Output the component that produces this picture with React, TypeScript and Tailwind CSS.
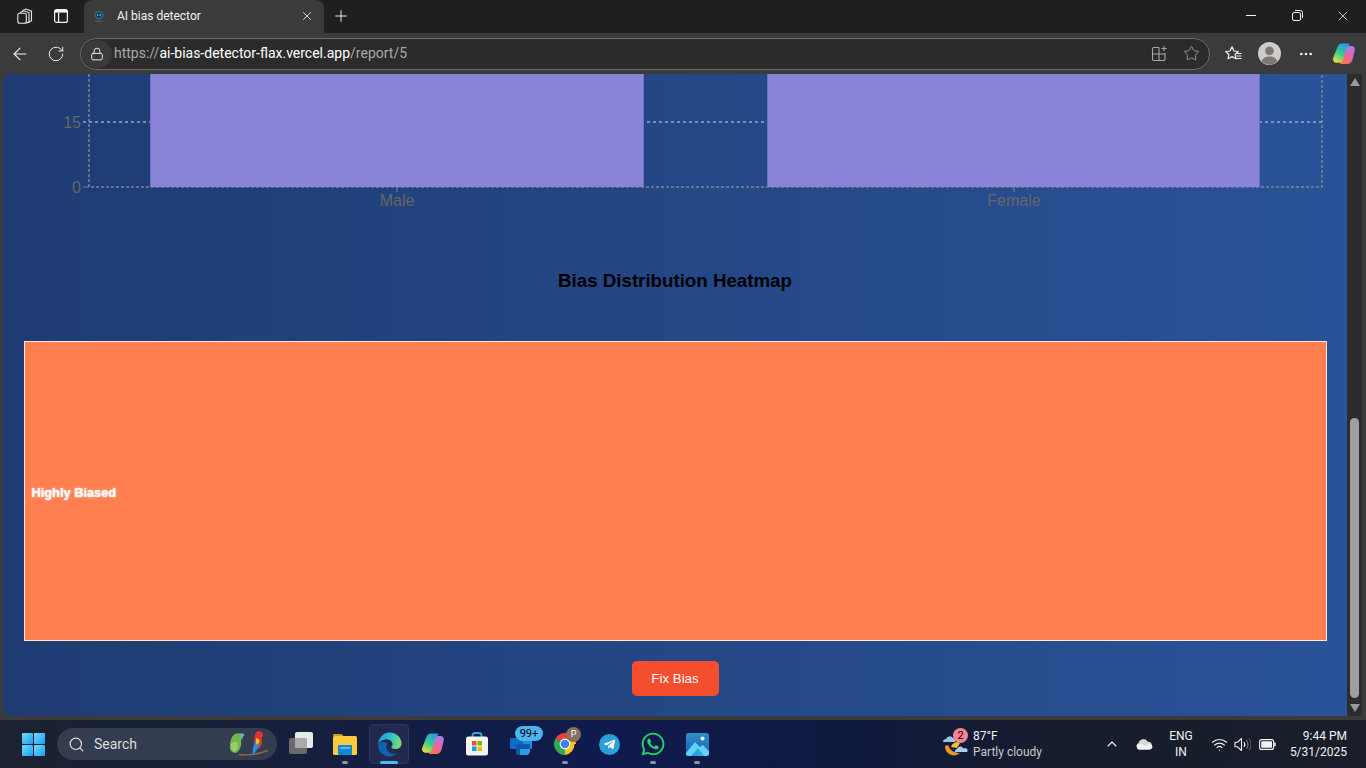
import { ArrowLeft, ChevronUp, Lock, MoreHorizontal, Plus, RotateCw, Search, Star, Wifi, X } from 'lucide-react';
import { FaTelegramPlane, FaWhatsapp } from 'react-icons/fa';
import type { ReactNode } from 'react';

function TabsIcon() {
  return (
    <svg width="18" height="18" viewBox="0 0 18 18" fill="none" stroke="#e8e8e8" strokeWidth="1.1">
      <path d="M6.5 3.5 10 2l5.5 2.200v9.600L12 15.800" />
      <path d="M4 5.500 8 3.800l5 2v9l-3 1.400" />
      <rect x="1.800" y="6.200" width="8.500" height="10" rx="2" />
    </svg>
  );
}

function VerticalTabsIcon() {
  return (
    <svg width="16" height="16" viewBox="0 0 16 16" fill="none" stroke="#f2f2f2" strokeWidth="1.2">
      <rect x="1.600" y="1.600" width="12.800" height="12.800" rx="2" />
      <path d="M5.600 4.600v9.800" />
      <path d="M2 2h12v2.600H2z" fill="#f2f2f2" stroke="none" />
    </svg>
  );
}

function Favicon() {
  return (
    <svg width="12" height="14" viewBox="0 0 12 14">
      <circle cx="6" cy="6" r="4.500" fill="#2a6685" />
      <circle cx="6" cy="6" r="2.800" fill="#12384f" />
      <circle cx="4.800" cy="6" r="0.800" fill="#8fd4ee" />
      <circle cx="7.200" cy="6" r="0.800" fill="#8fd4ee" />
      <rect x="2" y="11.500" width="8" height="1.500" rx="0.700" fill="#555" />
    </svg>
  );
}

function CollectionsIcon() {
  return (
    <svg width="17" height="17" viewBox="0 0 17 17" fill="none" stroke="#a8a8a8" strokeWidth="1.1">
      <path d="M8 2.500H3A1.500 1.500 0 0 0 1.500 4v10A1.500 1.500 0 0 0 3 15.500h9.500A1.500 1.500 0 0 0 14 14V8" />
      <path d="M1.500 9H14M8 2.500v13" />
      <path d="M13 1v5M10.500 3.500h5" />
    </svg>
  );
}

function FavoritesIcon() {
  return (
    <svg width="18" height="18" viewBox="0 0 18 18" fill="none" stroke="#f0f0f0" strokeWidth="1.2" strokeLinejoin="round">
      <path d="M7 1.800 9 6l4.300.5-3.200 3 .9 4.300-4-2.200-4 2.200.9-4.300-3.200-3L5 6z" />
      <path d="M11.500 8.500h5M11.500 11h5M10.500 13.500h6" />
    </svg>
  );
}

function Avatar() {
  return (
    <svg width="23" height="23" viewBox="0 0 23 23">
      <circle cx="11.500" cy="11.500" r="11.500" fill="#d0cdc9" />
      <circle cx="11.500" cy="8.800" r="4.400" fill="#7d7a76" />
      <path d="M3.600 19.600C5 15.800 8 14.600 11.500 14.600s6.500 1.200 7.900 5A11.500 11.500 0 0 1 3.600 19.600z" fill="#7d7a76" />
    </svg>
  );
}

function CopilotIcon({ id }: { id: string }) {
  return (
    <svg width="24" height="24" viewBox="0 0 24 24">
      <defs>
        <linearGradient id={`${id}a`} x1="0.700" y1="0" x2="0.200" y2="1">
          <stop offset="0" stopColor="#1f9cf0" />
          <stop offset="0.500" stopColor="#2fd08c" />
          <stop offset="1" stopColor="#f2d83c" />
        </linearGradient>
        <linearGradient id={`${id}b`} x1="0.800" y1="0" x2="0.300" y2="1">
          <stop offset="0" stopColor="#a97cf2" />
          <stop offset="0.550" stopColor="#ee62a8" />
          <stop offset="1" stopColor="#fa7a3c" />
        </linearGradient>
      </defs>
      <path d="M13.500 5.500c1-1.200 2.200-1.500 3.500-1.500h2.500c2.500 0 3.800 2 3.200 4.500l-2 8.500c-.7 3-2.700 5-5.700 5H10c-1.200 0-2-.5-2.200-1.300z" fill={`url(#${id}b)`} />
      <path d="M5.500 5c.7-2.500 2.500-3.500 4.500-3.500h6c1.500 0 2 .8 1.300 1.500-1.500.8-2.800 2.500-3.500 5l-2.800 9.500c-.6 2-2 3.300-4 3.300H5c-3 0-4.500-2.300-3.800-5z" fill={`url(#${id}a)`} />
    </svg>
  );
}

function WindowsLogo() {
  const pane = 'rounded-[1px] bg-[linear-gradient(135deg,#6fdcfb,#1b9cf0)]';
  return (
    <div className="grid h-[23px] w-[23px] grid-cols-2 gap-[1px]">
      <div className={pane} />
      <div className={pane} />
      <div className={pane} />
      <div className={pane} />
    </div>
  );
}

function Parrots() {
  return (
    <svg width="42" height="28" viewBox="0 0 42 28">
      <path d="M11 24.500c8 1 18 0 29-4" stroke="#8a6a50" strokeWidth="1.400" fill="none" />
      <path d="M4 7c2-4 8-5 11-2 1.500 2-1 4-2 5 1 5-1 11-5 13-4 0-7-3-6-8 0-3 1-6 2-8z" fill="#72b54e" />
      <path d="M3 14c2-3 6-3 7 0 .5 3-1 6-3 8-3-1-5-4-4-8z" fill="#9ccb6a" />
      <circle cx="14" cy="5.500" r="2.200" fill="#5fb4c8" />
      <path d="M15.500 6c1.500.2 2 1.500 1.200 3-1 0-1.700-.7-1.900-1.500z" fill="#2a3a42" />
      <ellipse cx="30" cy="11" rx="4" ry="7.500" fill="#e2362a" />
      <circle cx="31" cy="5" r="3.800" fill="#e2362a" />
      <path d="M28 11c3 0 4 3 2 7l-5 7.500c-1-5 0-10 3-14.500z" fill="#2f8fd8" />
      <path d="M28 8.500c3 0 4 2 3 4.500l-3 1.500z" fill="#f1c21b" />
    </svg>
  );
}

function TaskView() {
  return (
    <div className="relative h-[24px] w-[24px]">
      <div className="absolute left-0 top-[6px] h-[16px] w-[18px] rounded-[2px] bg-[#6a6a6a]" />
      <div className="absolute right-0 top-0 h-[16px] w-[18px] rounded-[2px] bg-[#e8e8e8]" />
      <div className="absolute left-[6px] top-[6px] h-[10px] w-[12px] bg-[#aaaaaa]" />
    </div>
  );
}

function ExplorerIcon() {
  return (
    <svg width="26" height="24" viewBox="0 0 26 24">
      <path d="M1 3.500C1 2.500 1.700 2 2.500 2h7l2.500 2.500h-11z" fill="#d29a12" />
      <rect x="1" y="4" width="24" height="19" rx="1.500" fill="#fbcb3d" />
      <rect x="6" y="13" width="14" height="10" rx="1" fill="#1387d4" />
      <rect x="8" y="15" width="10" height="2" fill="#55b9ef" />
    </svg>
  );
}

function EdgeIcon() {
  return (
    <svg width="25" height="25" viewBox="0 0 24 24">
      <defs>
        <linearGradient id="edgeTop" x1="0" y1="0.500" x2="1" y2="0.700">
          <stop offset="0" stopColor="#1b9de2" />
          <stop offset="0.550" stopColor="#30c6c6" />
          <stop offset="1" stopColor="#8ee05c" />
        </linearGradient>
      </defs>
      <path d="M1 11.500c-.6 6.500 4.500 12 11 12 3 0 5.400-1 7.500-3-3 1-6.400.6-8.500-1.500-2.200-2.200-2.700-5.500-1-8 0 0-5.500-3.500-9 .5z" fill="#0f62b0" />
      <path d="M1 11.500C2 5 6.500.5 12 .5c6.500 0 11.500 4.800 11.500 10.500 0 3.200-2.500 5.300-5.700 5.300-2.300 0-4-.8-4.200-2 1.600-1 1.700-3.200.6-4.800C12.800 7.300 9.800 6.300 7 7.300c-2.800 1-4.800 2.300-6 4.200z" fill="url(#edgeTop)" />
    </svg>
  );
}

function StoreIcon() {
  return (
    <svg width="24" height="24" viewBox="0 0 24 24">
      <path d="M7.500 6V3.500C7.500 2 8.500 1 10 1h4c1.500 0 2.500 1 2.500 2.500V6" fill="none" stroke="#2fa8e8" strokeWidth="1.800" />
      <rect x="1" y="4.500" width="22" height="19" rx="2.500" fill="#f4f4f4" />
      <rect x="7" y="9" width="4.500" height="4.500" fill="#f25022" />
      <rect x="12.500" y="9" width="4.500" height="4.500" fill="#7fba00" />
      <rect x="7" y="14.500" width="4.500" height="4.500" fill="#00a4ef" />
      <rect x="12.500" y="14.500" width="4.500" height="4.500" fill="#ffb900" />
    </svg>
  );
}

function MailIcon() {
  return (
    <svg width="24" height="24" viewBox="0 0 24 24">
      <rect x="7" y="1" width="16" height="16" rx="1.500" fill="#1e8fe0" />
      <rect x="1" y="6" width="13" height="11" rx="1.500" fill="#0f6cc4" />
      <path d="M7 12h14v6c0 3-2 5-5 5H9c-1.200 0-2-.8-2-2z" fill="#0b57a8" />
      <path d="M11 17h10v2c0 2-1.500 4-4 4h-6z" fill="#2c9ae8" />
    </svg>
  );
}

function ChromeIcon() {
  return (
    <svg width="24" height="24" viewBox="0 0 24 24">
      <path d="M12 12 2.470 6.500A11 11 0 0 1 21.530 6.500z" fill="#e5443a" />
      <path d="M12 12h9.530A11 11 0 0 1 12 23z" fill="#f9c61e" />
      <path d="M12 23A11 11 0 0 1 2.470 6.500L12 12z" fill="#32a853" />
      <path d="M12 12 21.530 6.500A11 11 0 0 1 23 12z" fill="#f9c61e" />
      <circle cx="12" cy="12" r="5.400" fill="#fff" />
      <circle cx="12" cy="12" r="4.300" fill="#3b82ea" />
    </svg>
  );
}

function PhotosIcon() {
  return (
    <svg width="23" height="23" viewBox="0 0 23 23">
      <defs>
        <linearGradient id="photoBg" x1="0" y1="0" x2="0" y2="1">
          <stop offset="0" stopColor="#2f8fd0" />
          <stop offset="1" stopColor="#1a5ea8" />
        </linearGradient>
      </defs>
      <rect width="23" height="23" rx="2.500" fill="url(#photoBg)" />
      <circle cx="16.500" cy="5.500" r="2" fill="#e8f6ff" />
      <path d="M0 20 9 9l5 5 3-2 6 6v2.500A2.500 2.500 0 0 1 20.500 23h-18A2.500 2.500 0 0 1 0 20.500z" fill="#5fd3f7" />
      <path d="M5 23l7-8 6 8z" fill="#2da3e0" />
    </svg>
  );
}

function WeatherIcon() {
  return (
    <svg width="26" height="26" viewBox="0 0 26 26">
      <path d="M3 15a9 9 0 0 0 15 7c-5 0-10-2-12-8z" fill="#e99a22" />
      <path d="M9 16a6 6 0 0 1 9-4l-3 5z" fill="#f3c234" />
      <path d="M1 11a3 3 0 0 1 3-3 4 4 0 0 1 7-1 3 3 0 0 1 2 4z" fill="#9cc3ea" />
      <path d="M13 21a2.500 2.500 0 0 1 2-3 3.500 3.500 0 0 1 6.500-.5A2.500 2.500 0 0 1 25 21z" fill="#a9cdef" />
    </svg>
  );
}

function OneDriveIcon() {
  return (
    <svg width="18" height="12" viewBox="0 0 18 12">
      <path d="M4 11.500A3.500 3.500 0 0 1 3.500 5 5 5 0 0 1 12.800 3.800 4 4 0 0 1 14.500 11.500z" fill="#d8d8d8" />
      <path d="M2 7c3-2 6-1 8 1l4-2c2 0 3.500 2 3.500 3S16 11.500 14.500 11.500H4C2.500 11.500 1.500 9 2 7z" fill="#f4f4f4" />
    </svg>
  );
}

function SpeakerIcon() {
  return (
    <svg width="17" height="15" viewBox="0 0 17 15" fill="none" stroke="#f2f2f2" strokeWidth="1.100" strokeLinejoin="round">
      <path d="M1 5.200h2.500L7.500 1.500v12L3.500 9.800H1z" />
      <path d="M10 5c1 1.500 1 3.500 0 5" />
      <path d="M12.500 3c1.800 2.800 1.800 6.200 0 9" stroke="#777" />
      <path d="M15 1.500c2.300 3.700 2.300 8.300 0 12" stroke="#555" />
    </svg>
  );
}

function BatteryIcon() {
  return (
    <svg width="17" height="11" viewBox="0 0 17 11">
      <rect x="0.600" y="0.600" width="14" height="9.800" rx="2" fill="none" stroke="#f2f2f2" strokeWidth="1.100" />
      <rect x="2.200" y="2.200" width="10.800" height="6.600" rx="0.800" fill="#f2f2f2" />
      <rect x="15.200" y="3.500" width="1.500" height="4" rx="0.700" fill="#f2f2f2" />
    </svg>
  );
}

function Slot({ children, dot, active }: { children: ReactNode; dot?: boolean; active?: boolean }) {
  return (
    <div className="relative flex h-[40px] w-[44px] items-center justify-center">
      {active && <div className="absolute left-[2px] top-0 h-[40px] w-[40px] rounded border border-[#2b3563] bg-[#22294f]" />}
      <div className="relative flex items-center justify-center">{children}</div>
      {dot && <div className="absolute bottom-0 left-[19px] h-[3px] w-[6px] rounded-full bg-[#8c93a6]" />}
      {active && <div className="absolute bottom-0 left-[13px] h-[3px] w-[18px] rounded-full bg-[#4fb8f5]" />}
    </div>
  );
}

function BarChart() {
  return (
    <svg width="1344" height="135" viewBox="0 0 1344 135" className="block shrink-0">
      <path d="M86 0V113H1319V0" fill="none" stroke="#80858f" strokeWidth="1.500" strokeDasharray="3 2" />
      <path d="M80 48H1319" fill="none" stroke="#98a6c8" strokeWidth="1.500" strokeDasharray="3 3" />
      <path d="M80 113H86M394 113V118M1011 113V118" stroke="#80858f" strokeWidth="1" />
      <rect x="148" y="0" width="493" height="113" fill="#8a84d8" />
      <rect x="764" y="0" width="493" height="113" fill="#8a84d8" />
      <path d="M147.500 0V113M640.500 0V113M764.500 0V113M1256.500 0V113" stroke="#6d70c4" strokeWidth="1" />
      <g fill="#666666" fontSize="16" fontFamily="'Liberation Sans', Arial, sans-serif">
        <text x="78" y="54" textAnchor="end">15</text>
        <text x="78" y="119" textAnchor="end">0</text>
        <text x="394" y="132" textAnchor="middle">Male</text>
        <text x="1011" y="132" textAnchor="middle">Female</text>
      </g>
    </svg>
  );
}

export default function App() {
  return (
    <div className="flex h-screen w-screen flex-col overflow-hidden bg-[#3b3b3b] font-['Roboto',sans-serif]">
      <div className="flex h-[33px] shrink-0 items-end bg-[#1f1f1f]">
        <div className="flex h-[33px] w-[84px] items-center pb-[2px]">
          <div className="flex w-[50px] justify-center"><TabsIcon /></div>
          <div className="flex w-[22px] justify-center"><VerticalTabsIcon /></div>
        </div>
        <div className="flex h-[33px] w-[240px] items-center rounded-t-lg bg-[#3b3b3b] pb-[2px] pl-[9px] pr-[10px]">
          <Favicon />
          <span className="ml-[12px] flex-1 text-[12px] text-[#f2f2f2]">AI bias detector</span>
          <X size={14} strokeWidth={1.5} color="#e8e8e8" />
        </div>
        <div className="flex h-[33px] w-[34px] items-center justify-center pb-[2px]">
          <Plus size={18} strokeWidth={1.3} color="#f2f2f2" />
        </div>
        <div className="ml-auto flex h-[33px] items-center pb-[2px]">
          <div className="flex w-[46px] justify-center"><div className="h-[1px] w-[10px] bg-[#f2f2f2]" /></div>
          <div className="flex w-[46px] justify-center">
            <svg width="11" height="11" viewBox="0 0 11 11" fill="none" stroke="#f2f2f2"><rect x="0.500" y="2.500" width="8" height="8" rx="1.500" /><path d="M3 .5h5.500a2 2 0 0 1 2 2V8" /></svg>
          </div>
          <div className="flex w-[46px] justify-center"><X size={16} strokeWidth={1.2} color="#f2f2f2" /></div>
        </div>
      </div>

      <div className="flex h-[41px] shrink-0 items-center">
        <div className="flex w-[40px] justify-center"><ArrowLeft size={20} strokeWidth={1.3} color="#f0f0f0" /></div>
        <div className="flex w-[32px] justify-center"><RotateCw size={18} strokeWidth={1.3} color="#f0f0f0" /></div>
        <div className="ml-[8px] flex h-[32px] w-[1130px] items-center rounded-full border border-[#6b6b6b] bg-[#2b2b2b] pr-[9px]">
          <div className="ml-[1px] flex h-[28px] w-[30px] items-center justify-center rounded-full bg-[#3a3a3a]">
            <Lock size={14} strokeWidth={1.6} color="#f0f0f0" />
          </div>
          <span className="ml-[2px] text-[14px] text-[#a9a9a9]">https://<span className="text-white">ai-bias-detector-flax.vercel.app</span>/report/5</span>
          <div className="ml-auto flex items-center gap-[15px]">
            <CollectionsIcon />
            <Star size={17} strokeWidth={1.2} color="#a8a8a8" />
          </div>
        </div>
        <div className="ml-[15px] flex items-center"><FavoritesIcon /></div>
        <div className="ml-[15px] flex items-center"><Avatar /></div>
        <div className="ml-[17px] flex items-center"><MoreHorizontal size={16} color="#f0f0f0" /></div>
        <div className="ml-[18px] flex items-center"><CopilotIcon id="cpBar" /></div>
      </div>

      <div className="flex h-[642px] shrink-0 pl-[3px]">
        <div className="flex h-full w-[1344px] flex-col items-center overflow-hidden rounded-tl-lg rounded-bl-lg bg-[linear-gradient(90deg,#1e3c72,#2a5298)] font-['Liberation_Sans',Arial,sans-serif]">
          <BarChart />
          <h2 className="mt-[60px] text-[18.72px] font-bold leading-[24px] text-black">Bias Distribution Heatmap</h2>
          <div className="mt-[48px] flex h-[300px] w-[1303px] shrink-0 items-center border border-[#ffe9df] bg-[#ff7f50] pl-[7px]">
            <span className="mt-[4px] text-[12.8px] font-bold text-white [text-shadow:0_0_2px_#fff]">Highly Biased</span>
          </div>
          <button className="mt-[20px] h-[35px] w-[87px] rounded-[5px] bg-[#f44e2f] text-[13.33px] text-white">Fix Bias</button>
        </div>
        <div className="flex h-full w-[15px] flex-col items-center rounded-b bg-[#2c2c2c]">
          <div className="mt-[4px] h-0 w-0 border-x-[5px] border-b-[8px] border-x-transparent border-b-[#9a9a9a]" />
          <div className="mt-[332px] h-[280px] w-[9px] rounded-full bg-[#9f9f9f]" />
          <div className="mt-[6px] h-0 w-0 border-x-[5px] border-t-[8px] border-x-transparent border-t-[#9a9a9a]" />
        </div>
      </div>

      <div className="mt-[4px] flex h-[48px] shrink-0 items-center bg-[linear-gradient(90deg,#1b2230_0%,#161f3c_22%,#0f1b4e_45%,#101a40_62%,#171d2c_78%,#191e2a_100%)] pl-[11px] text-[#f2f2f2]">
        <div className="flex w-[44px] justify-center"><WindowsLogo /></div>
        <div className="ml-[2px] flex h-[32px] w-[220px] items-center rounded-full bg-[#343d4f] pl-[11px] pr-[7px]">
          <Search size={17} strokeWidth={1.6} color="#e6e6e6" />
          <span className="ml-[9px] text-[14px] text-[#dcdcdc]">Search</span>
          <div className="ml-auto"><Parrots /></div>
        </div>
        <div className="ml-[2px] flex items-center">
          <Slot><TaskView /></Slot>
          <Slot dot><ExplorerIcon /></Slot>
          <Slot active><EdgeIcon /></Slot>
          <Slot><CopilotIcon id="cpTask" /></Slot>
          <Slot><StoreIcon /></Slot>
          <Slot>
            <MailIcon />
            <div className="absolute left-[6px] top-[-6px] flex h-[15px] w-[28px] items-center justify-center rounded-full bg-[#4cb5f0] text-[11px] leading-none text-black">99+</div>
          </Slot>
          <Slot dot>
            <ChromeIcon />
            <div className="absolute left-[13px] top-[-5px] flex h-[15px] w-[15px] items-center justify-center rounded-full bg-[#8a6d5f] text-[9px] leading-none text-white">P</div>
          </Slot>
          <Slot>
            <div className="flex h-[21px] w-[21px] items-center justify-center rounded-full bg-[#2a9fd8]"><FaTelegramPlane size={13} color="#fff" /></div>
          </Slot>
          <Slot dot><FaWhatsapp size={26} color="#25d366" /></Slot>
          <Slot dot><PhotosIcon /></Slot>
        </div>
        <div className="ml-[223px] flex items-center">
          <div className="relative h-[26px] w-[31px]">
            <WeatherIcon />
            <div className="absolute left-[11px] top-[-3px] flex h-[15px] w-[15px] items-center justify-center rounded-full bg-[#f88493] text-[11px] leading-none text-black">2</div>
          </div>
          <div className="flex w-[129px] flex-col text-[12px] leading-[16px]">
            <span>87°F</span>
            <span className="text-[#c9c9c9]">Partly cloudy</span>
          </div>
        </div>
        <div className="ml-[2px] flex items-center">
          <ChevronUp size={16} strokeWidth={1.6} color="#f2f2f2" />
          <div className="ml-[15px]"><OneDriveIcon /></div>
          <div className="ml-[8px] flex w-[40px] flex-col items-center text-[12px] leading-[16px]">
            <span>ENG</span>
            <span>IN</span>
          </div>
          <div className="ml-[10px]"><Wifi size={17} strokeWidth={1.6} color="#f2f2f2" /></div>
          <div className="ml-[6px]"><SpeakerIcon /></div>
          <div className="ml-[8px]"><BatteryIcon /></div>
          <div className="ml-[15px] flex w-[56px] flex-col items-end text-[12px] leading-[16px]">
            <span>9:44 PM</span>
            <span>5/31/2025</span>
          </div>
        </div>
      </div>
    </div>
  );
}
